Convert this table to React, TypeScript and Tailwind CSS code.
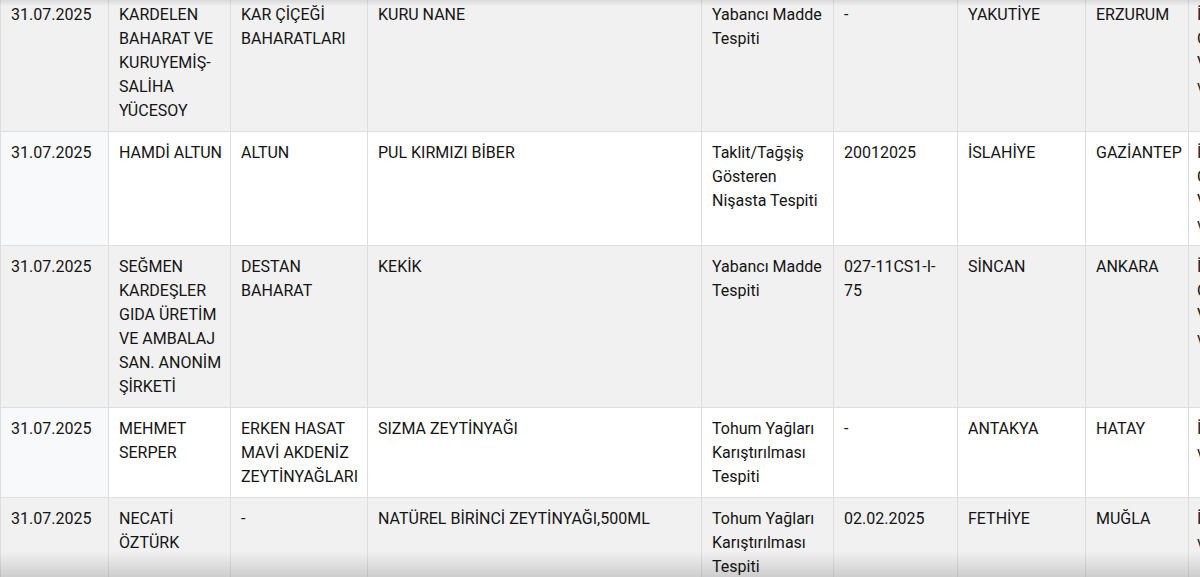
const rows = [
  {
    date: '31.07.2025',
    firm: 'KARDELEN BAHARAT VE KURUYEMİŞ-SALİHA YÜCESOY',
    brand: 'KAR ÇİÇEĞİ BAHARATLARI',
    product: 'KURU NANE',
    issue: 'Yabancı Madde Tespiti',
    lot: '-',
    district: 'YAKUTİYE',
    city: 'ERZURUM',
    group: ['İdari Para', 'Cezası', 'Verildi', 've'],
  },
  {
    date: '31.07.2025',
    firm: 'HAMDİ ALTUN',
    brand: 'ALTUN',
    product: 'PUL KIRMIZI BİBER',
    issue: 'Taklit/Tağşiş Gösteren Nişasta Tespiti',
    lot: '20012025',
    district: 'İSLAHİYE',
    city: 'GAZİANTEP',
    group: ['İdari Para', 'Cezası', 'Verildi', 've'],
  },
  {
    date: '31.07.2025',
    firm: 'SEĞMEN KARDEŞLER GIDA ÜRETİM VE AMBALAJ SAN. ANONİM ŞİRKETİ',
    brand: 'DESTAN BAHARAT',
    product: 'KEKİK',
    issue: 'Yabancı Madde Tespiti',
    lot: '027-11CS1-I-75',
    district: 'SİNCAN',
    city: 'ANKARA',
    group: ['İdari Para', 'Cezası', 'Verildi', 've'],
  },
  {
    date: '31.07.2025',
    firm: 'MEHMET SERPER',
    brand: 'ERKEN HASAT MAVİ AKDENİZ ZEYTİNYAĞLARI',
    product: 'SIZMA ZEYTİNYAĞI',
    issue: 'Tohum Yağları Karıştırılması Tespiti',
    lot: '-',
    district: 'ANTAKYA',
    city: 'HATAY',
    group: ['İdari', 've'],
  },
  {
    date: '31.07.2025',
    firm: 'NECATİ ÖZTÜRK',
    brand: '-',
    product: 'NATÜREL BİRİNCİ ZEYTİNYAĞI,500ML',
    issue: 'Tohum Yağları Karıştırılması Tespiti',
    lot: '02.02.2025',
    district: 'FETHİYE',
    city: 'MUĞLA',
    group: ['İdari', 've'],
  },
];

const cell = 'border border-[#dedede] pl-[10px] pr-[5px] pt-[9px] pb-[8px] align-top';

export default function App() {
  return (
    <div
      className="relative w-[1200px] h-[577px] overflow-hidden bg-white text-[16px] leading-6 text-[#141414]"
      style={{ fontFamily: 'Roboto, "Noto Sans", Arial, sans-serif' }}
    >
      <table className="-mt-[7px] w-[1388px] table-fixed border-collapse">
        <colgroup>
          <col className="w-[108px]" />
          <col className="w-[122px]" />
          <col className="w-[137px]" />
          <col className="w-[334px]" />
          <col className="w-[132px]" />
          <col className="w-[124px]" />
          <col className="w-[128px]" />
          <col className="w-[103px]" />
          <col className="w-[200px]" />
        </colgroup>
        <tbody>
          {rows.map((r, i) => {
            const striped = i % 2 === 0;
            return (
              <tr key={i} className={striped ? 'bg-[#f1f1f1]' : 'bg-white'}>
                <td className={`${cell} ${striped ? '' : 'bg-[#f8f9fb]'}`}>{r.date}</td>
                <td className={cell}>{r.firm}</td>
                <td className={cell}>{r.brand}</td>
                <td className={cell}>{r.product}</td>
                <td className={cell}>{r.issue}</td>
                <td className={cell}>{r.lot}</td>
                <td className={cell}>{r.district}</td>
                <td className={cell}>{r.city}</td>
                <td className={`${cell} !pl-[8px]`}>
                  {r.group.map((g, j) => (
                    <div key={j}>{g}</div>
                  ))}
                </td>
              </tr>
            );
          })}
        </tbody>
      </table>

      {/* screenshot shading at top and bottom edges */}
      <div className="pointer-events-none absolute inset-x-0 top-0 h-[6px] bg-gradient-to-b from-black/10 to-transparent" />
      <div className="pointer-events-none absolute inset-x-0 bottom-0 h-[26px] bg-gradient-to-t from-black/15 to-transparent" />
    </div>
  );
}
